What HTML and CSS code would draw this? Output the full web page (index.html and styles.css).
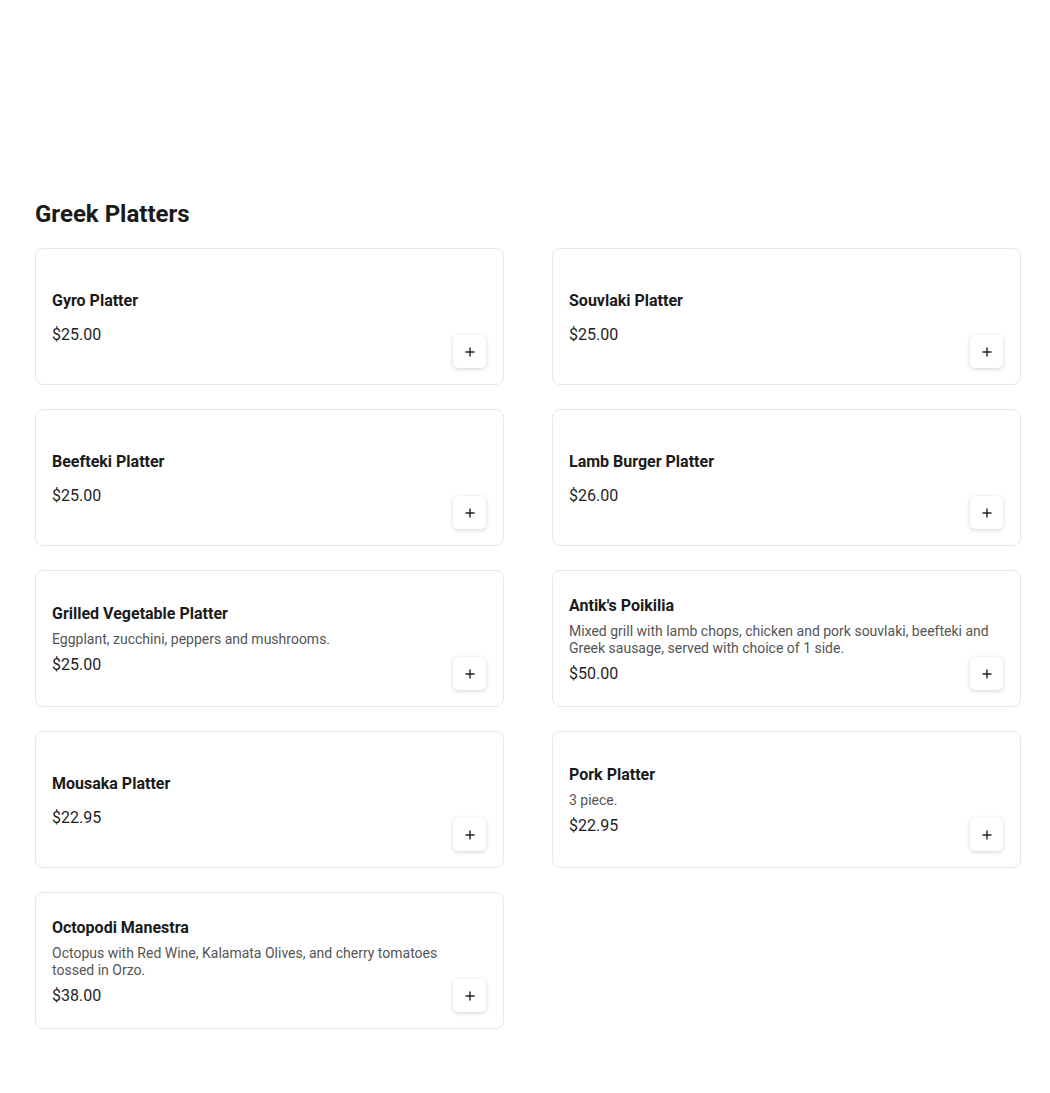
FILE: index.html
```html
<!DOCTYPE html>
<html lang="en">
<head>
<meta charset="utf-8">
<title>Greek Platters</title>
<link rel="stylesheet" href="styles.css">
</head>
<body>
<main class="page">
  <section class="section">
    <h2 class="section-title">Greek Platters</h2>
    <div class="grid">
      <div class="card">
        <div class="info"><div class="name">Gyro Platter</div><div class="desc"></div><div class="price">$25.00</div></div>
        <button class="add" aria-label="Add"><svg width="10" height="10" viewBox="0 0 10 10"><path d="M5 0.5v9M0.5 5h9" stroke="#222" stroke-width="1.4"/></svg></button>
      </div>
      <div class="card">
        <div class="info"><div class="name">Souvlaki Platter</div><div class="desc"></div><div class="price">$25.00</div></div>
        <button class="add" aria-label="Add"><svg width="10" height="10" viewBox="0 0 10 10"><path d="M5 0.5v9M0.5 5h9" stroke="#222" stroke-width="1.4"/></svg></button>
      </div>
      <div class="card">
        <div class="info"><div class="name">Beefteki Platter</div><div class="desc"></div><div class="price">$25.00</div></div>
        <button class="add" aria-label="Add"><svg width="10" height="10" viewBox="0 0 10 10"><path d="M5 0.5v9M0.5 5h9" stroke="#222" stroke-width="1.4"/></svg></button>
      </div>
      <div class="card">
        <div class="info"><div class="name">Lamb Burger Platter</div><div class="desc"></div><div class="price">$26.00</div></div>
        <button class="add" aria-label="Add"><svg width="10" height="10" viewBox="0 0 10 10"><path d="M5 0.5v9M0.5 5h9" stroke="#222" stroke-width="1.4"/></svg></button>
      </div>
      <div class="card">
        <div class="info"><div class="name">Grilled Vegetable Platter</div><div class="desc">Eggplant, zucchini, peppers and mushrooms.</div><div class="price">$25.00</div></div>
        <button class="add" aria-label="Add"><svg width="10" height="10" viewBox="0 0 10 10"><path d="M5 0.5v9M0.5 5h9" stroke="#222" stroke-width="1.4"/></svg></button>
      </div>
      <div class="card">
        <div class="info"><div class="name">Antik's Poikilia</div><div class="desc">Mixed grill with lamb chops, chicken and pork souvlaki, beefteki and Greek sausage, served with choice of 1 side.</div><div class="price">$50.00</div></div>
        <button class="add" aria-label="Add"><svg width="10" height="10" viewBox="0 0 10 10"><path d="M5 0.5v9M0.5 5h9" stroke="#222" stroke-width="1.4"/></svg></button>
      </div>
      <div class="card">
        <div class="info"><div class="name">Mousaka Platter</div><div class="desc"></div><div class="price">$22.95</div></div>
        <button class="add" aria-label="Add"><svg width="10" height="10" viewBox="0 0 10 10"><path d="M5 0.5v9M0.5 5h9" stroke="#222" stroke-width="1.4"/></svg></button>
      </div>
      <div class="card">
        <div class="info"><div class="name">Pork Platter</div><div class="desc">3 piece.</div><div class="price">$22.95</div></div>
        <button class="add" aria-label="Add"><svg width="10" height="10" viewBox="0 0 10 10"><path d="M5 0.5v9M0.5 5h9" stroke="#222" stroke-width="1.4"/></svg></button>
      </div>
      <div class="card">
        <div class="info"><div class="name">Octopodi Manestra</div><div class="desc">Octopus with Red Wine, Kalamata Olives, and cherry tomatoes tossed in Orzo.</div><div class="price">$38.00</div></div>
        <button class="add" aria-label="Add"><svg width="10" height="10" viewBox="0 0 10 10"><path d="M5 0.5v9M0.5 5h9" stroke="#222" stroke-width="1.4"/></svg></button>
      </div>
    </div>
  </section>
</main>
</body>
</html>
```
FILE: styles.css
```css
* { box-sizing: border-box; }
html, body { margin: 0; padding: 0; background: #fff; }
body {
  font-family: Roboto, "Liberation Sans", Arial, sans-serif;
  color: #1a1a1a;
}
.page {
  padding: 198px 29px 60px 35px;
}
.section-title {
  margin: 0 0 18px;
  font-size: 24px;
  line-height: 32px;
  font-weight: 700;
  color: #1a1a1a;
}
.grid {
  display: grid;
  grid-template-columns: 469px 469px;
  column-gap: 48px;
  row-gap: 24px;
}
.card {
  position: relative;
  height: 137px;
  border: 1px solid #e8e8e8;
  border-radius: 8px;
  padding: 18px 16px 16px;
  display: flex;
  align-items: center;
  background: #fff;
}
.info {
  display: flex;
  flex-direction: column;
  gap: 7px;
  width: 426px;
}
.name {
  font-size: 16px;
  line-height: 20px;
  font-weight: 700;
  color: #1a1a1a;
}
.desc {
  font-size: 14px;
  line-height: 17px;
  color: #555;
}
.price {
  font-size: 16px;
  line-height: 20px;
  color: #1f1f1f;
}
.add {
  position: absolute;
  right: 17px;
  bottom: 16px;
  width: 33px;
  height: 33px;
  border: none;
  border-radius: 5px;
  background: #fff;
  box-shadow: 0 1px 4px rgba(0, 0, 0, 0.18);
  display: flex;
  align-items: center;
  justify-content: center;
  padding: 0;
  cursor: pointer;
}
```
